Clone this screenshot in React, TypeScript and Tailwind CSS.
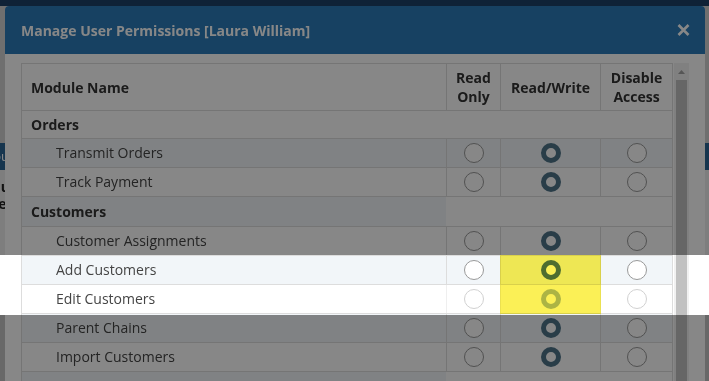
import { Fragment } from "react"

type Row =
    | { kind: "group"; name: string; split?: boolean; h: string }
    | { kind: "item"; name: string; value: "ro" | "rw" | "none"; disabled?: boolean }

const rows: Row[] = [
    { kind: "group", name: "Orders", h: "h-[28px]" },
    { kind: "item", name: "Transmit Orders", value: "rw" },
    { kind: "item", name: "Track Payment", value: "rw" },
    { kind: "group", name: "Customers", split: true, h: "h-[30px]" },
    { kind: "item", name: "Customer Assignments", value: "rw" },
    { kind: "item", name: "Add Customers", value: "rw" },
    { kind: "item", name: "Edit Customers", value: "rw", disabled: true },
    { kind: "item", name: "Parent Chains", value: "rw" },
    { kind: "item", name: "Import Customers", value: "rw" },
    { kind: "group", name: "", split: true, h: "h-[30px]" },
]

function Radio({ checked }: { checked: boolean }) {
    if (checked) {
        return <span className="block h-[20px] w-[20px] rounded-full border-[5px] border-[#4f7489] bg-white" />
    }
    return <span className="block h-[20px] w-[20px] rounded-full border border-[#999] bg-white" />
}

export default function App() {
    return (
        <div className="relative h-[381px] w-[709px] overflow-hidden bg-[#d2d2d2] font-['Open_Sans',sans-serif]">
            {/* page behind the dialog */}
            <div className="flex h-full flex-col">
                <div className="h-[6px] bg-[#1d4168]" />
                <div className="h-[137px]" />
                <div className="flex h-[27px] items-center bg-[#2b6594] text-[13px] text-white">
                    <span className="-ml-[14px]">You</span>
                </div>
                <div className="flex h-[85px] flex-col bg-[#eeeeee] pt-[8px] text-[14px] font-bold leading-[17px] text-[#222]">
                    <span className="-ml-[30px]">Menu</span>
                    <span className="-ml-[28px]">Order</span>
                </div>
                <div className="h-[60px] bg-white" />
                <div className="flex-1 bg-[#c4c4c4]" />
            </div>

            {/* dialog */}
            <div className="absolute left-[5px] top-[6px] h-[420px] w-[700px] overflow-hidden rounded-t-[4px] bg-white">
                <div className="flex h-[48px] items-center justify-between bg-[#2c7cba] pl-4 pr-[15px]">
                    <h2 className="text-[14px] font-bold text-white">Manage User Permissions [Laura William]</h2>
                    <svg width="13" height="12" viewBox="0 0 13 12" className="text-white">
                        <path d="M1.5 1L11.5 11M11.5 1L1.5 11" stroke="currentColor" strokeWidth="2.6" />
                    </svg>
                </div>

                <div className="flex pl-4 pt-[9px]">
                    <div className="w-[652px] border border-[#ddd] text-[14px]">
                        <div className="grid h-[47px] grid-cols-[424px_54px_100px_72px] border-b border-[#ddd] font-bold leading-[19px] text-[#333]">
                            <div className="flex items-center pl-[9px]">Module Name</div>
                            <div className="flex items-center justify-center border-l border-[#ddd] text-center">Read<br />Only</div>
                            <div className="flex items-center justify-center border-l border-[#ddd]">Read/Write</div>
                            <div className="flex items-center justify-center border-l border-[#ddd] text-center">Disable<br />Access</div>
                        </div>

                        {rows.map((row, i) => {
                            const stripe = i % 2 === 1 ? "bg-[#f2f6f9]" : "bg-white"
                            if (row.kind === "group") {
                                return (
                                    <div key={i} className={`grid grid-cols-[424px_54px_100px_72px] border-b border-[#ddd] font-bold text-[#333] ${row.h}`}>
                                        {row.split ? (
                                            <Fragment>
                                                <div className={`flex items-center pl-[9px] ${stripe}`}>{row.name}</div>
                                                <div className="col-span-3 bg-white" />
                                            </Fragment>
                                        ) : (
                                            <div className={`col-span-4 flex items-center pl-[9px] ${stripe}`}>{row.name}</div>
                                        )}
                                    </div>
                                )
                            }
                            return (
                                <div key={i} className={`grid h-[29px] grid-cols-[424px_54px_100px_72px] border-b border-[#ddd] text-[#444] ${stripe}`}>
                                    <div className="flex items-center pb-[2px] pl-[34px]">{row.name}</div>
                                    {(["ro", "rw", "none"] as const).map((v) => (
                                        <div key={v} className={`flex items-center justify-center border-l border-[#ddd] ${row.disabled ? "opacity-45" : ""}`}>
                                            <Radio checked={row.value === v} />
                                        </div>
                                    ))}
                                </div>
                            )
                        })}
                    </div>

                    {/* scrollbar */}
                    <div className="ml-[1px] flex h-[380px] w-[15px] flex-col bg-[#f1f1f1]">
                        <div className="flex h-[17px] items-center justify-center">
                            <svg width="7" height="4" viewBox="0 0 7 4">
                                <path d="M3.5 0L7 4H0Z" fill="#a3a3a3" />
                            </svg>
                        </div>
                        <div className="mx-[2px] flex-1 bg-[#c1c1c1]" />
                    </div>
                </div>
            </div>

            {/* spotlight dimming */}
            <div className="absolute inset-x-0 top-0 h-[255px] bg-black/[0.47]" />
            <div className="absolute inset-x-0 bottom-0 top-[315px] bg-black/[0.47]" />

            {/* highlighter */}
            <div className="absolute left-[500px] top-[255px] h-[59px] w-[101px] bg-[#fbf056] mix-blend-multiply" />
        </div>
    )
}
